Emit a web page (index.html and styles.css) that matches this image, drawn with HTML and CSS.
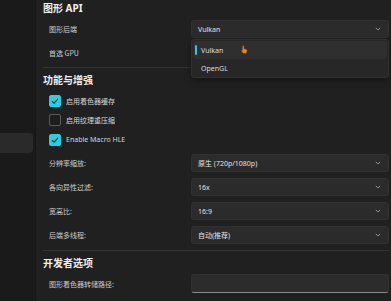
FILE: index.html
```html
<!DOCTYPE html>
<html lang="zh">
<head>
<meta charset="utf-8">
<link rel="stylesheet" href="styles.css">
</head>
<body>
<div class="app">
  <aside class="sidebar">
    <div class="nav-item active"></div>
  </aside>
  <main class="content">
    <h2 class="heading h-first">图形 API</h2>
    <div class="rows rows-api">
      <div class="row">
        <span class="label">图形后端</span>
        <div class="select open">
          <span class="value">Vulkan</span>
          <svg class="chev" viewBox="0 0 6 4" width="6" height="4"><path d="M0.8 0.8 L3 3 L5.2 0.8" fill="none" stroke="#9a9a9a" stroke-width="0.9"/></svg>
          <div class="menu">
            <div class="menu-item selected"><span class="accent"></span>Vulkan
              <svg class="cursor" viewBox="0 0 8 10" width="7" height="9"><path d="M2.5 0.8 C3.2 0.8 3.4 1.3 3.4 2 L3.4 4.2 L5.6 4.6 C6.6 4.8 7 5.4 6.8 6.4 L6.3 8.6 C6.2 9.1 5.8 9.4 5.3 9.4 L3 9.4 C2.6 9.4 2.3 9.2 2 8.8 L0.6 6.6 C0.3 6.1 0.6 5.6 1.1 5.6 C1.4 5.6 1.6 5.8 1.7 6 L1.7 2 C1.7 1.3 1.9 0.8 2.5 0.8 Z" fill="#e38a2c" stroke="#8a4a12" stroke-width="0.5"/></svg>
            </div>
            <div class="menu-item">OpenGL</div>
          </div>
        </div>
      </div>
      <div class="row">
        <span class="label">首选 GPU</span>
        <div class="select"><span class="value"></span></div>
      </div>
    </div>
    <div class="divider d-first"></div>

    <h2 class="heading h-second">功能与增强</h2>
    <div class="checks">
      <div class="check-row"><span class="box on"><svg viewBox="0 0 12 12" width="12" height="12"><path d="M3 6.2 L5.1 8.2 L9 3.8" fill="none" stroke="#0d3a40" stroke-width="1.2"/></svg></span><span class="check-label">启用着色器缓存</span></div>
      <div class="check-row"><span class="box"></span><span class="check-label">启用纹理重压缩</span></div>
      <div class="check-row"><span class="box on"><svg viewBox="0 0 12 12" width="12" height="12"><path d="M3 6.2 L5.1 8.2 L9 3.8" fill="none" stroke="#0d3a40" stroke-width="1.2"/></svg></span><span class="check-label latin">Enable Macro HLE</span></div>
    </div>
    <div class="rows rows-opts">
      <div class="row">
        <span class="label">分辨率缩放:</span>
        <div class="select"><span class="value">原生 (720p/1080p)</span><svg class="chev" viewBox="0 0 6 4" width="6" height="4"><path d="M0.8 0.8 L3 3 L5.2 0.8" fill="none" stroke="#9a9a9a" stroke-width="0.9"/></svg></div>
      </div>
      <div class="row">
        <span class="label">各向异性过滤:</span>
        <div class="select"><span class="value">16x</span><svg class="chev" viewBox="0 0 6 4" width="6" height="4"><path d="M0.8 0.8 L3 3 L5.2 0.8" fill="none" stroke="#9a9a9a" stroke-width="0.9"/></svg></div>
      </div>
      <div class="row">
        <span class="label">宽高比:</span>
        <div class="select"><span class="value">16:9</span><svg class="chev" viewBox="0 0 6 4" width="6" height="4"><path d="M0.8 0.8 L3 3 L5.2 0.8" fill="none" stroke="#9a9a9a" stroke-width="0.9"/></svg></div>
      </div>
      <div class="row">
        <span class="label">后端多线程:</span>
        <div class="select"><span class="value">自动(推荐)</span><svg class="chev" viewBox="0 0 6 4" width="6" height="4"><path d="M0.8 0.8 L3 3 L5.2 0.8" fill="none" stroke="#9a9a9a" stroke-width="0.9"/></svg></div>
      </div>
    </div>
    <div class="divider d-second"></div>

    <h2 class="heading h-third">开发者选项</h2>
    <div class="rows rows-dev">
      <div class="row row-input">
        <span class="label">图形着色器转储路径:</span>
        <div class="input"></div>
      </div>
    </div>
  </main>
</div>
</body>
</html>
```
FILE: styles.css
```css
* { box-sizing: border-box; margin: 0; padding: 0; }
html, body { width: 391px; height: 301px; overflow: hidden; }
body {
  background: #202020;
  font-family: "Noto Sans", "Noto Sans CJK SC", sans-serif;
  color: #d4d4d4;
}
.app { display: flex; height: 301px; }
.sidebar {
  width: 36px;
  flex: none;
  background: #1a1a1a;
  border-right: 1px solid #161616;
  padding-top: 133px;
}
.nav-item.active {
  width: 33px;
  height: 20px;
  background: #2a2a2a;
  border-radius: 0 4px 4px 0;
}
.content {
  flex: 1;
  padding: 0 2px 0 7px;
  min-width: 0;
}
.heading {
  font-family: "Noto Sans", "Noto Sans CJK SC", sans-serif;
  font-size: 10px;
  font-weight: 700;
  line-height: 16px;
  height: 16px;
  color: #efefef;
}
.h-second { margin-top: 4px; }
.h-third { margin-top: 4px; }
.rows { display: flex; flex-direction: column; gap: 6px; }
.rows-api { margin-top: 4px; }
.rows-opts { margin-top: 4.5px; }
.rows-dev { margin-top: 3px; }
.row {
  display: grid;
  grid-template-columns: 1fr 198px;
  align-items: center;
  height: 18px;
}
.row-input { height: 19px; }
.label {
  padding-left: 6px;
  font-size: 7px;
  color: #cdcdcd;
  font-family: "Noto Sans CJK SC", sans-serif;
}
.select {
  position: relative;
  height: 18px;
  background: #2b2b2b;
  border: 1px solid #313131;
  border-radius: 3px;
  display: flex;
  align-items: center;
  justify-content: space-between;
  padding: 0 7px 0 6px;
}
.value {
  font-size: 7px;
  color: #e2e2e2;
  font-family: "Noto Sans", "Noto Sans CJK SC", sans-serif;
}
.chev { display: block; }
.menu {
  position: absolute;
  left: -1px;
  top: 18px;
  width: 198px;
  height: 39px;
  background: #272727;
  border: 1px solid #303030;
  border-radius: 3px;
  box-shadow: 0 3px 6px rgba(0,0,0,0.35);
  padding: 1px 1px;
  z-index: 5;
}
.menu-item {
  position: relative;
  height: 18px;
  display: flex;
  align-items: center;
  padding-left: 8px;
  font-size: 7px;
  color: #dedede;
  border-radius: 3px;
}
.menu-item.selected { background: #2f2f2f; }
.accent {
  position: absolute;
  left: 2px;
  top: 4px;
  width: 2px;
  height: 10px;
  border-radius: 1px;
  background: #34c6d8;
}
.cursor {
  position: absolute;
  left: 48px;
  top: 4px;
}
.divider { height: 1px; background: #343434; }
.d-first { margin-top: 5px; }
.d-second { margin-top: 6px; }
.checks {
  margin-top: 3px;
  padding-left: 6px;
  display: flex;
  flex-direction: column;
}
.check-row {
  height: 19.5px;
  display: flex;
  align-items: center;
  gap: 5px;
}
.box {
  width: 12px;
  height: 12px;
  border-radius: 2px;
  border: 1px solid #5a5a5a;
  background: #1e1e1e;
  display: block;
  flex: none;
}
.box svg { display: block; margin: -1px; }
.box.on { background: #27cfe3; border-color: #27cfe3; }
.check-label {
  font-size: 7px;
  color: #d6d6d6;
  font-family: "Noto Sans CJK SC", sans-serif;
}
.check-label.latin { font-family: "Noto Sans", sans-serif; font-size: 7px; }
.input {
  height: 19px;
  background: #2c2c2c;
  border: 1px solid #313131;
  border-bottom: 1.5px solid #8a8a8a;
  border-radius: 3px;
}
```
